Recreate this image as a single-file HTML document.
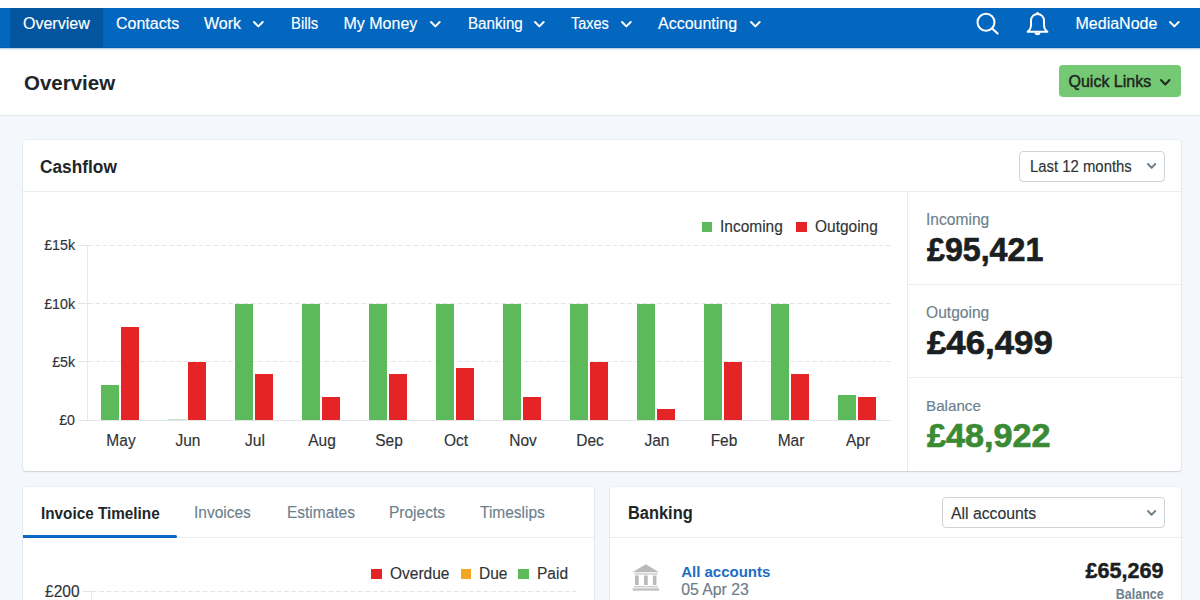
<!DOCTYPE html><html><head><meta charset="utf-8"><style>
*{margin:0;padding:0;box-sizing:border-box}
html,body{width:1200px;height:600px;overflow:hidden;background:#f4f7fc;font-family:"Liberation Sans",sans-serif}
.ab{position:absolute}
.t{position:absolute;white-space:nowrap;line-height:1;-webkit-text-stroke:0.15px currentColor}
.t[style*="bold"]{-webkit-text-stroke:0}
</style></head><body>
<div class="ab" style="left:0;top:0;width:1200px;height:116px;background:#fff;border-bottom:1px solid #e4e8ee"></div>
<div class="ab" style="left:0;top:8px;width:1200px;height:40px;background:#0467bf;box-shadow:inset 0 -1px 0 rgba(0,50,110,.15),0 1px 1.5px rgba(10,90,170,.35)"></div>
<div class="ab" style="left:10px;top:8px;width:93px;height:40px;background:#02559e"></div>
<div class="t" style="left:23px;top:15.86px;font-size:16.00px;color:#fff;">Overview</div>
<div class="t" style="left:116px;top:15.86px;font-size:16.00px;color:#fff;">Contacts</div>
<div class="t" style="left:204px;top:15.86px;font-size:16.00px;color:#fff;">Work</div>
<svg class="ab" style="left:251px;top:19.1px" width="14.7" height="10.4" viewBox="-3 -3 14.7 10.4"><polyline points="0,0 4.35,4.4 8.7,0" fill="none" stroke="#fff" stroke-width="2" stroke-linecap="round" stroke-linejoin="round"/></svg>
<div class="t" style="left:291px;top:15.86px;font-size:16.00px;color:#fff;transform-origin:0 0;transform:scaleX(0.9300);">Bills</div>
<div class="t" style="left:343.5px;top:15.86px;font-size:16.00px;color:#fff;">My Money</div>
<svg class="ab" style="left:428px;top:19.1px" width="14.7" height="10.4" viewBox="-3 -3 14.7 10.4"><polyline points="0,0 4.35,4.4 8.7,0" fill="none" stroke="#fff" stroke-width="2" stroke-linecap="round" stroke-linejoin="round"/></svg>
<div class="t" style="left:467.5px;top:15.86px;font-size:16.00px;color:#fff;transform-origin:0 0;transform:scaleX(0.9470);">Banking</div>
<svg class="ab" style="left:532px;top:19.1px" width="14.7" height="10.4" viewBox="-3 -3 14.7 10.4"><polyline points="0,0 4.35,4.4 8.7,0" fill="none" stroke="#fff" stroke-width="2" stroke-linecap="round" stroke-linejoin="round"/></svg>
<div class="t" style="left:571px;top:15.86px;font-size:16.00px;color:#fff;transform-origin:0 0;transform:scaleX(0.9050);">Taxes</div>
<svg class="ab" style="left:619px;top:19.1px" width="14.7" height="10.4" viewBox="-3 -3 14.7 10.4"><polyline points="0,0 4.35,4.4 8.7,0" fill="none" stroke="#fff" stroke-width="2" stroke-linecap="round" stroke-linejoin="round"/></svg>
<div class="t" style="left:658px;top:15.86px;font-size:16.00px;color:#fff;">Accounting</div>
<svg class="ab" style="left:747.6px;top:19.1px" width="14.7" height="10.4" viewBox="-3 -3 14.7 10.4"><polyline points="0,0 4.35,4.4 8.7,0" fill="none" stroke="#fff" stroke-width="2" stroke-linecap="round" stroke-linejoin="round"/></svg>
<div class="t" style="left:1075.5px;top:15.86px;font-size:16.00px;color:#fff;">MediaNode</div>
<svg class="ab" style="left:1167px;top:19.1px" width="14.7" height="10.4" viewBox="-3 -3 14.7 10.4"><polyline points="0,0 4.35,4.4 8.7,0" fill="none" stroke="#fff" stroke-width="2" stroke-linecap="round" stroke-linejoin="round"/></svg>
<svg class="ab" style="left:974px;top:10px" width="28" height="28" viewBox="0 0 28 28"><circle cx="12" cy="12.25" r="8.5" fill="none" stroke="#fff" stroke-width="2"/><line x1="18.2" y1="18.4" x2="23.6" y2="23.6" stroke="#fff" stroke-width="2.1" stroke-linecap="round"/></svg>
<svg class="ab" style="left:1024px;top:10px" width="28" height="28" viewBox="0 0 28 28"><path d="M3.6 21.8 C6 20 7 18 7 15 L7 10.5 A6.5 6.5 0 0 1 20 10.5 L20 15 C20 18 21 20 23.4 21.8 Z" fill="none" stroke="#fff" stroke-width="2" stroke-linejoin="round"/><path d="M10.6 22.5 A2.9 2.7 0 0 0 16.4 22.5 Z" fill="#fff"/><circle cx="13.5" cy="3.4" r="1.3" fill="#fff"/></svg>
<div class="t" style="left:23.5px;top:72.33px;font-size:21.12px;color:#222528;font-weight:bold;transform-origin:0 0;transform:scaleX(0.9709);">Overview</div>
<div class="ab" style="left:1059px;top:65px;width:122px;height:32px;background:#76c974;border-radius:4px"></div>
<div class="t" style="left:1068.5px;top:74.06px;font-size:16.00px;color:#1f2620;-webkit-text-stroke:0.45px #1f2620;">Quick Links</div>
<svg class="ab" style="left:1158.2px;top:76.8px" width="14.5" height="10.5" viewBox="-3 -3 14.5 10.5"><polyline points="0,0 4.25,4.5 8.5,0" fill="none" stroke="#1d2b1d" stroke-width="2" stroke-linecap="round" stroke-linejoin="round"/></svg>
<div class="ab" style="left:23px;top:140px;width:1158px;height:331px;background:#fff;border-radius:3px;box-shadow:0 1px 1.5px rgba(40,50,60,.16),0 0 0.5px 0.5px rgba(40,50,60,.07)"></div>
<div class="ab" style="left:23px;top:191px;width:1158px;height:1px;background:#e9edf0"></div>
<div class="t" style="left:40px;top:156.59px;font-size:19.03px;color:#222528;font-weight:bold;transform-origin:0 0;transform:scaleX(0.9091);">Cashflow</div>
<div class="ab" style="left:1019px;top:151px;width:146px;height:31px;border:1px solid #cdd4d9;border-radius:4px;background:#fff"></div>
<div class="t" style="left:1029.5px;top:157.83px;font-size:16.39px;color:#303336;transform-origin:0 0;transform:scaleX(0.9091);">Last 12 months</div>
<svg class="ab" style="left:1144.9px;top:161.4px" width="13.2" height="9.9" viewBox="-3 -3 13.2 9.9"><polyline points="0,0 3.6,3.9 7.2,0" fill="none" stroke="#6c7f8d" stroke-width="1.9" stroke-linecap="round" stroke-linejoin="round"/></svg>
<div class="ab" style="left:907px;top:192px;width:1px;height:279px;background:#e9edf0"></div>
<div class="ab" style="left:908px;top:284px;width:273px;height:1px;background:#e9edf0"></div>
<div class="ab" style="left:908px;top:377px;width:273px;height:1px;background:#e9edf0"></div>
<div class="t" style="left:926px;top:211.10px;font-size:16.07px;color:#6d808d;transform-origin:0 0;transform:scaleX(0.9709);">Incoming</div>
<div class="t" style="left:926px;top:304.10px;font-size:16.07px;color:#6d808d;transform-origin:0 0;transform:scaleX(0.9709);">Outgoing</div>
<div class="t" style="left:926px;top:398.03px;font-size:15.20px;color:#6d808d;">Balance</div>
<div class="t" style="left:927.3px;top:232.77px;font-size:33.00px;color:#1c1f22;font-weight:bold;-webkit-text-stroke:0.7px #1c1f22;transform-origin:0 0;transform:scaleX(0.9750);">£95,421</div>
<div class="t" style="left:927.3px;top:325.77px;font-size:33.00px;color:#1c1f22;font-weight:bold;-webkit-text-stroke:0.7px #1c1f22;transform-origin:0 0;transform:scaleX(1.0550);">£46,499</div>
<div class="t" style="left:927.3px;top:418.77px;font-size:33.00px;color:#3b8a34;font-weight:bold;-webkit-text-stroke:0.7px #3b8a34;transform-origin:0 0;transform:scaleX(1.0350);">£48,922</div>
<div class="ab" style="left:78px;top:244.80px;width:9px;height:1px;background:#e4e5e8"></div>
<div class="ab" style="left:87px;top:244.80px;width:804px;height:1px;background-image:linear-gradient(90deg,#e4e5e8 0,#e4e5e8 5px,transparent 5px);background-size:7.4px 1px;background-position:1px 0"></div>
<div class="t" style="right:1125px;top:238.28px;font-size:14.20px;color:#303336;">£15k</div>
<div class="ab" style="left:78px;top:303.10px;width:9px;height:1px;background:#e4e5e8"></div>
<div class="ab" style="left:87px;top:303.10px;width:804px;height:1px;background-image:linear-gradient(90deg,#e4e5e8 0,#e4e5e8 5px,transparent 5px);background-size:7.4px 1px;background-position:1px 0"></div>
<div class="t" style="right:1125px;top:296.58px;font-size:14.20px;color:#303336;">£10k</div>
<div class="ab" style="left:78px;top:361.40px;width:9px;height:1px;background:#e4e5e8"></div>
<div class="ab" style="left:87px;top:361.40px;width:804px;height:1px;background-image:linear-gradient(90deg,#e4e5e8 0,#e4e5e8 5px,transparent 5px);background-size:7.4px 1px;background-position:1px 0"></div>
<div class="t" style="right:1125px;top:354.88px;font-size:14.20px;color:#303336;">£5k</div>
<div class="t" style="right:1125px;top:413.18px;font-size:14.20px;color:#303336;">£0</div>
<div class="ab" style="left:78px;top:419.7px;width:813px;height:1.5px;background:#e1e5ea"></div>
<div class="ab" style="left:86.5px;top:245px;width:1px;height:175px;background:#e6e9ed"></div>
<div class="ab" style="left:101.00px;top:385.22px;width:18.2px;height:34.98px;background:#5dba5b"></div>
<div class="ab" style="left:121.10px;top:326.92px;width:18.2px;height:93.28px;background:#e52425"></div>
<div class="t" style="left:20.5px;width:200px;text-align:center;top:433.06px;font-size:16.59px;color:#303336;transform-origin:50% 0;transform:scaleX(0.9346);">May</div>
<div class="ab" style="left:168.00px;top:419.20px;width:18.2px;height:1px;background:#bfe3be"></div>
<div class="ab" style="left:188.10px;top:361.90px;width:18.2px;height:58.30px;background:#e52425"></div>
<div class="t" style="left:87.5px;width:200px;text-align:center;top:433.06px;font-size:16.59px;color:#303336;transform-origin:50% 0;transform:scaleX(0.9346);">Jun</div>
<div class="ab" style="left:235.00px;top:303.60px;width:18.2px;height:116.60px;background:#5dba5b"></div>
<div class="ab" style="left:255.10px;top:373.56px;width:18.2px;height:46.64px;background:#e52425"></div>
<div class="t" style="left:154.5px;width:200px;text-align:center;top:433.06px;font-size:16.59px;color:#303336;transform-origin:50% 0;transform:scaleX(0.9346);">Jul</div>
<div class="ab" style="left:302.00px;top:303.60px;width:18.2px;height:116.60px;background:#5dba5b"></div>
<div class="ab" style="left:322.10px;top:396.88px;width:18.2px;height:23.32px;background:#e52425"></div>
<div class="t" style="left:221.5px;width:200px;text-align:center;top:433.06px;font-size:16.59px;color:#303336;transform-origin:50% 0;transform:scaleX(0.9346);">Aug</div>
<div class="ab" style="left:369.00px;top:303.60px;width:18.2px;height:116.60px;background:#5dba5b"></div>
<div class="ab" style="left:389.10px;top:373.56px;width:18.2px;height:46.64px;background:#e52425"></div>
<div class="t" style="left:288.5px;width:200px;text-align:center;top:433.06px;font-size:16.59px;color:#303336;transform-origin:50% 0;transform:scaleX(0.9346);">Sep</div>
<div class="ab" style="left:436.00px;top:303.60px;width:18.2px;height:116.60px;background:#5dba5b"></div>
<div class="ab" style="left:456.10px;top:367.73px;width:18.2px;height:52.47px;background:#e52425"></div>
<div class="t" style="left:355.5px;width:200px;text-align:center;top:433.06px;font-size:16.59px;color:#303336;transform-origin:50% 0;transform:scaleX(0.9346);">Oct</div>
<div class="ab" style="left:503.00px;top:303.60px;width:18.2px;height:116.60px;background:#5dba5b"></div>
<div class="ab" style="left:523.10px;top:396.88px;width:18.2px;height:23.32px;background:#e52425"></div>
<div class="t" style="left:422.5px;width:200px;text-align:center;top:433.06px;font-size:16.59px;color:#303336;transform-origin:50% 0;transform:scaleX(0.9346);">Nov</div>
<div class="ab" style="left:570.00px;top:303.60px;width:18.2px;height:116.60px;background:#5dba5b"></div>
<div class="ab" style="left:590.10px;top:361.90px;width:18.2px;height:58.30px;background:#e52425"></div>
<div class="t" style="left:489.5px;width:200px;text-align:center;top:433.06px;font-size:16.59px;color:#303336;transform-origin:50% 0;transform:scaleX(0.9346);">Dec</div>
<div class="ab" style="left:637.00px;top:303.60px;width:18.2px;height:116.60px;background:#5dba5b"></div>
<div class="ab" style="left:657.10px;top:408.54px;width:18.2px;height:11.66px;background:#e52425"></div>
<div class="t" style="left:556.5px;width:200px;text-align:center;top:433.06px;font-size:16.59px;color:#303336;transform-origin:50% 0;transform:scaleX(0.9346);">Jan</div>
<div class="ab" style="left:704.00px;top:303.60px;width:18.2px;height:116.60px;background:#5dba5b"></div>
<div class="ab" style="left:724.10px;top:361.90px;width:18.2px;height:58.30px;background:#e52425"></div>
<div class="t" style="left:623.5px;width:200px;text-align:center;top:433.06px;font-size:16.59px;color:#303336;transform-origin:50% 0;transform:scaleX(0.9346);">Feb</div>
<div class="ab" style="left:771.00px;top:303.60px;width:18.2px;height:116.60px;background:#5dba5b"></div>
<div class="ab" style="left:791.10px;top:373.56px;width:18.2px;height:46.64px;background:#e52425"></div>
<div class="t" style="left:690.5px;width:200px;text-align:center;top:433.06px;font-size:16.59px;color:#303336;transform-origin:50% 0;transform:scaleX(0.9346);">Mar</div>
<div class="ab" style="left:838.00px;top:395.13px;width:18.2px;height:25.07px;background:#5dba5b"></div>
<div class="ab" style="left:858.10px;top:396.88px;width:18.2px;height:23.32px;background:#e52425"></div>
<div class="t" style="left:757.5px;width:200px;text-align:center;top:433.06px;font-size:16.59px;color:#303336;transform-origin:50% 0;transform:scaleX(0.9346);">Apr</div>
<div class="ab" style="left:701.9px;top:221.9px;width:10.4px;height:10.2px;background:#5dba5b"></div>
<div class="t" style="left:720px;top:217.57px;font-size:17.05px;color:#303336;transform-origin:0 0;transform:scaleX(0.9091);">Incoming</div>
<div class="ab" style="left:796px;top:221.9px;width:10.5px;height:10.2px;background:#e52425"></div>
<div class="t" style="left:814.5px;top:217.57px;font-size:17.05px;color:#303336;transform-origin:0 0;transform:scaleX(0.9091);">Outgoing</div>
<div class="ab" style="left:23px;top:487px;width:571px;height:140px;background:#fff;border-radius:3px;box-shadow:0 1px 1.5px rgba(40,50,60,.16),0 0 0.5px 0.5px rgba(40,50,60,.07)"></div>
<div class="ab" style="left:23px;top:537px;width:571px;height:1px;background:#e9edf0"></div>
<div class="ab" style="left:23px;top:535px;width:154px;height:2.5px;background:#0b67c4;border-radius:0 2px 2px 0"></div>
<div class="t" style="left:40.5px;top:504.87px;font-size:16.22px;color:#222528;font-weight:bold;transform-origin:0 0;transform:scaleX(0.9434);">Invoice Timeline</div>
<div class="t" style="left:194px;top:503.57px;font-size:17.05px;color:#6d808d;transform-origin:0 0;transform:scaleX(0.9091);">Invoices</div>
<div class="t" style="left:286.8px;top:503.57px;font-size:17.05px;color:#6d808d;transform-origin:0 0;transform:scaleX(0.9091);">Estimates</div>
<div class="t" style="left:389px;top:503.57px;font-size:17.05px;color:#6d808d;transform-origin:0 0;transform:scaleX(0.9091);">Projects</div>
<div class="t" style="left:480.3px;top:503.57px;font-size:17.05px;color:#6d808d;transform-origin:0 0;transform:scaleX(0.9091);">Timeslips</div>
<div class="ab" style="left:371px;top:568.5px;width:10.5px;height:10.5px;background:#e52425"></div>
<div class="t" style="left:390px;top:565.96px;font-size:16.59px;color:#303336;transform-origin:0 0;transform:scaleX(0.9346);">Overdue</div>
<div class="ab" style="left:460.5px;top:568.5px;width:10.5px;height:10.5px;background:#f4a623"></div>
<div class="t" style="left:479px;top:565.96px;font-size:16.59px;color:#303336;transform-origin:0 0;transform:scaleX(0.9346);">Due</div>
<div class="ab" style="left:518px;top:568.5px;width:10.5px;height:10.5px;background:#5dba5b"></div>
<div class="t" style="left:537px;top:565.96px;font-size:16.59px;color:#303336;transform-origin:0 0;transform:scaleX(0.9346);">Paid</div>
<div class="ab" style="left:83px;top:591.3px;width:9px;height:1px;background:#e4e5e8"></div>
<div class="ab" style="left:92px;top:591.3px;width:484px;height:1px;background-image:linear-gradient(90deg,#e4e5e8 0,#e4e5e8 5px,transparent 5px);background-size:7.4px 1px"></div>
<div class="ab" style="left:91.3px;top:591.5px;width:1px;height:20px;background:#e6e9ed"></div>
<div class="t" style="right:1120.7px;top:583.79px;font-size:15.96px;color:#303336;transform-origin:100% 0;transform:scaleX(0.9709);">£200</div>
<div class="ab" style="left:610px;top:487px;width:571px;height:140px;background:#fff;border-radius:3px;box-shadow:0 1px 1.5px rgba(40,50,60,.16),0 0 0.5px 0.5px rgba(40,50,60,.07)"></div>
<div class="ab" style="left:610px;top:537px;width:571px;height:1px;background:#e9edf0"></div>
<div class="t" style="left:628px;top:503.53px;font-size:18.04px;color:#222528;font-weight:bold;transform-origin:0 0;transform:scaleX(0.9091);">Banking</div>
<div class="ab" style="left:941.5px;top:497px;width:223px;height:31px;border:1px solid #cdd4d9;border-radius:4px;background:#fff"></div>
<div class="t" style="left:951.3px;top:504.79px;font-size:16.43px;color:#303336;transform-origin:0 0;transform:scaleX(0.9615);">All accounts</div>
<svg class="ab" style="left:1144.8px;top:507.7px" width="13.2" height="9.9" viewBox="-3 -3 13.2 9.9"><polyline points="0,0 3.6,3.9 7.2,0" fill="none" stroke="#6c7f8d" stroke-width="1.9" stroke-linecap="round" stroke-linejoin="round"/></svg>
<svg class="ab" style="left:631px;top:564px" width="30" height="28" viewBox="0 0 30 28"><polygon points="14.8,0.3 28,8.3 1.4,8.3" fill="#bababa"/><rect x="3.5" y="9.3" width="23" height="1.4" fill="#cdcdcd"/><rect x="4" y="11.5" width="3.7" height="9.5" fill="#bababa"/><rect x="13" y="11.5" width="3.7" height="9.5" fill="#bababa"/><rect x="21.9" y="11.5" width="3.5" height="9.5" fill="#bababa"/><rect x="3" y="22" width="24" height="1.4" fill="#cdcdcd"/><rect x="1.7" y="24.3" width="26.3" height="2.4" fill="#c2c2c2"/></svg>
<div class="t" style="left:681.2px;top:563.60px;font-size:15.00px;color:#1c6dc3;font-weight:bold;">All accounts</div>
<div class="t" style="left:681.2px;top:582.23px;font-size:15.80px;color:#6d7c87;">05 Apr 23</div>
<div class="t" style="right:36.40000000000009px;top:560.22px;font-size:21.60px;color:#1c1f22;font-weight:bold;-webkit-text-stroke:0.45px #1c1f22;">£65,269</div>
<div class="t" style="right:36px;top:588.36px;font-size:13.75px;color:#6d808d;font-weight:bold;transform-origin:100% 0;transform:scaleX(0.9091);">Balance</div>
</body></html>
